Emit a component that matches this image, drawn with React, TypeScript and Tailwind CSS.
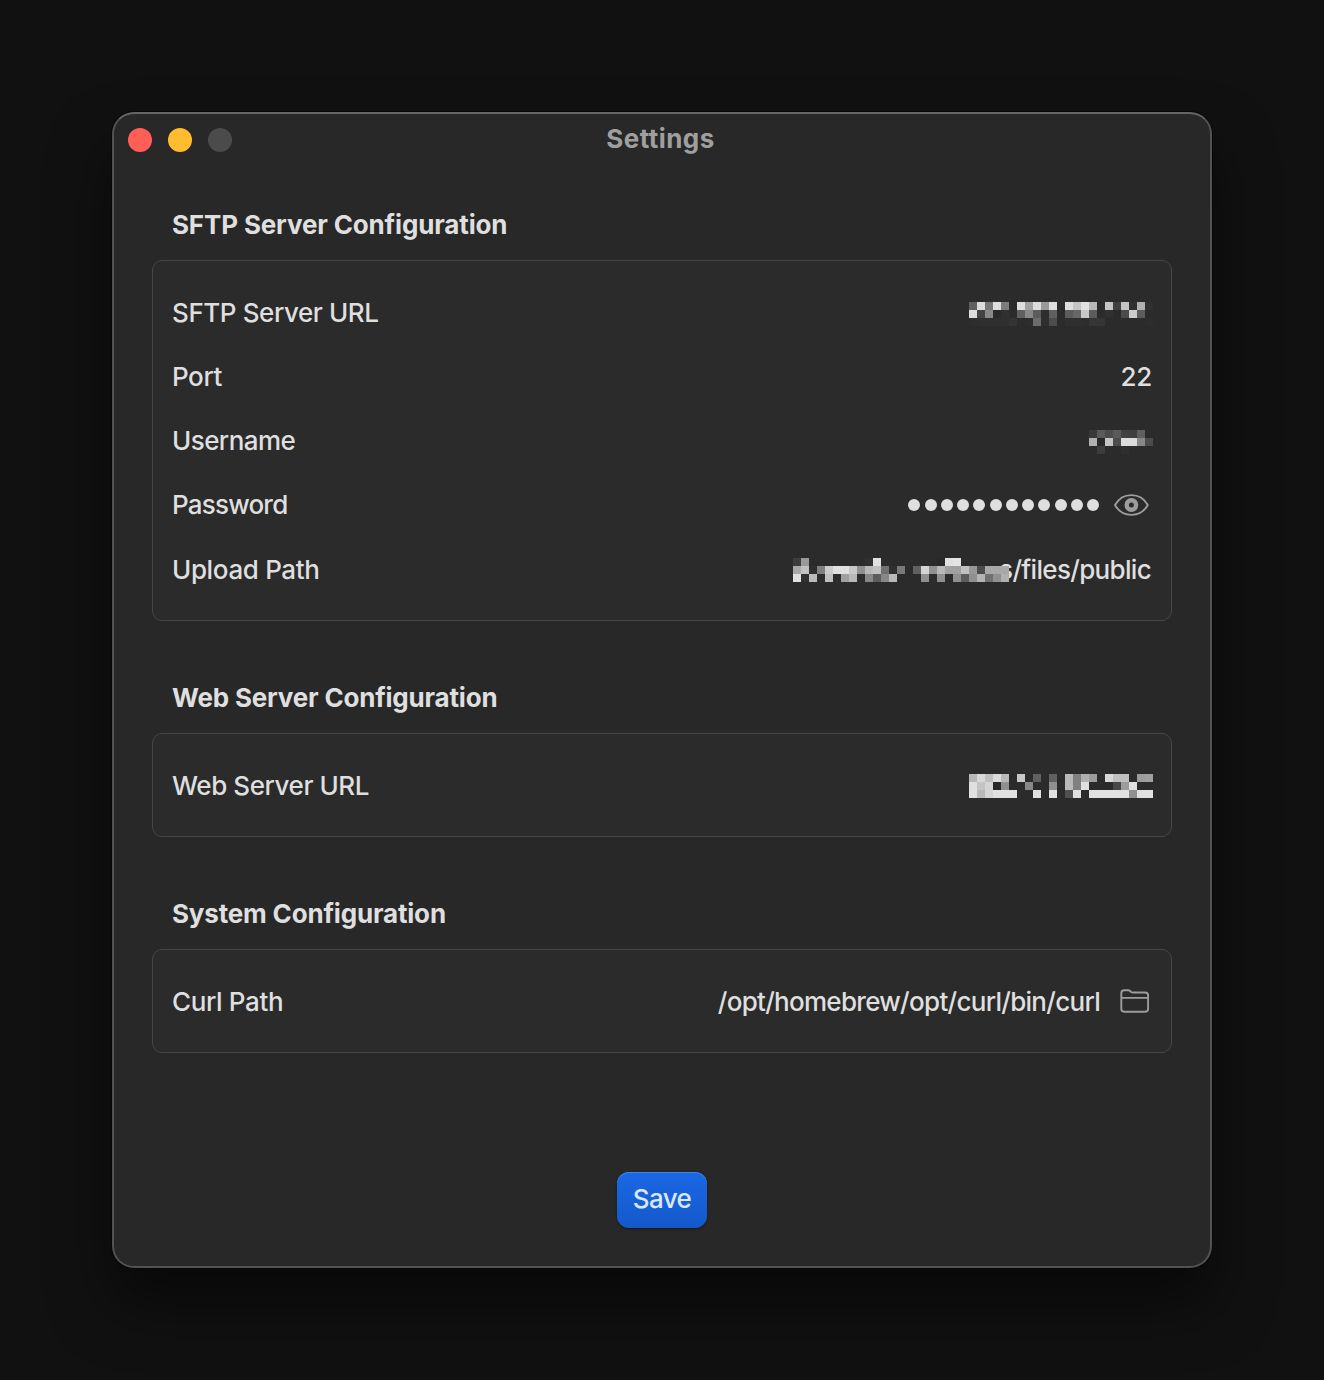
import type { ReactNode } from 'react';

const CELL = 8;

// Each row is a run of two-digit grey levels; ".." leaves the cell empty.
const MOSAICS = {
  sftpUrl: [
    '60 dc 77 de 7c .. dd a0 dd 99 dd .. dd c4 e0 b8 .. c4 40 c4 30 b0 30',
    'dd 44 8a 2a 30 .. 60 88 5c 2e 60 .. 5c 68 c8 5c .. 30 2a 4a cc 5c ..',
    '2d 2f 2f 2f 2f 34 .. 2d 6c 2f 4c .. 2f 2f 2d 35 35 .. .. .. .. .. 2d',
  ],
  username: [
    '38 5a 4c 5a 42 40 60 ..',
    'b0 28 c4 4c dc dc 88 4c',
    '.. 3c .. .. 2f .. .. ..',
  ],
  uploadPath: [
    '3c 99 .. .. .. .. .. .. .. 30 e0 .. .. .. .. .. .. .. 28 e0 e4 .. .. .. .. .. ..',
    'a8 c0 2f 80 cc e0 e0 c8 90 b8 c0 70 2f 78 .. 60 d4 90 b8 a0 a0 c0 98 4c a8 a8 a8',
    'e0 30 bc 2d c0 2d a0 b8 2d 88 5c 88 b8 .. .. .. 90 2d 90 .. 90 5c 90 b4 70 90 b0',
  ],
  webUrl: [
    'b8 d8 c0 dc b8 .. c8 .. 60 .. 60 .. b8 80 b0 9c .. d8 c0 c0 .. 9c a0',
    'e0 c4 d4 28 90 .. .. 88 .. .. 90 .. b8 80 e0 .. .. .. 48 9c e0 .. ..',
    'e0 b8 d4 e0 e0 e0 .. .. e0 .. e0 .. 50 e0 .. e0 e0 e0 e0 e0 90 e0 e0',
  ],
};

function Mosaic({ rows, className }: { rows: string[]; className: string }) {
  const cells = rows.map((r) => r.split(' '));
  const width = cells[0].length * CELL;
  const height = rows.length * CELL;
  return (
    <svg
      width={width}
      height={height}
      viewBox={`0 0 ${width} ${height}`}
      shapeRendering="crispEdges"
      className={`shrink-0 ${className}`}
    >
      {cells.map((row, y) =>
        row.map((c, x) =>
          c === '..' ? null : (
            <rect key={`${x}-${y}`} x={x * CELL} y={y * CELL} width={CELL} height={CELL} fill={`#${c}${c}${c}`} />
          ),
        ),
      )}
    </svg>
  );
}

function EyeIcon() {
  return (
    <svg width="36" height="24" viewBox="0 0 36 24" fill="none" className="ml-[15px] mr-[2px] shrink-0">
      <path
        d="M1 12C4.300 6.200 10.400 2.100 17.400 2.100S30.500 6.200 33.800 12C30.500 17.800 24.400 21.900 17.400 21.900S4.300 17.800 1 12Z"
        stroke="#9d9d9d"
        strokeWidth="1.9"
        strokeLinejoin="round"
      />
      <circle cx="17.4" cy="12" r="4.7" stroke="#9d9d9d" strokeWidth="4.4" />
    </svg>
  );
}

function FolderIcon() {
  return (
    <svg width="30" height="24" viewBox="0 0 30 24" fill="none" className="mb-[2px] ml-[20px] mr-[2px] shrink-0">
      <path
        d="M1.300 19.800V4.200Q1.300 1.300 4.200 1.300H8.200Q9.300 1.300 10.200 2L11.200 2.900Q12 3.500 13.200 3.500H25.200Q28.100 3.500 28.100 6.400V19.800Q28.100 22.700 25.200 22.700H4.200Q1.300 22.700 1.300 19.800ZM1.300 8.900H28.100"
        stroke="#9d9d9d"
        strokeWidth="1.9"
      />
    </svg>
  );
}

function Section({ title, className, children }: { title: string; className: string; children: ReactNode }) {
  return (
    <section>
      <h2 className={`pl-5 text-[26px] leading-8 font-bold text-[#dfdfdf] ${className}`}>{title}</h2>
      <div className="mt-[19px] rounded-[10px] border border-[#464646] bg-[#2b2b2b] px-[19px] pt-5 pb-[18px]">
        {children}
      </div>
    </section>
  );
}

function Row({ label, className, children }: { label: string; className: string; children: ReactNode }) {
  return (
    <div className="flex h-16 items-center justify-between whitespace-nowrap">
      <span className={className}>{label}</span>
      <div className="flex items-center">{children}</div>
    </div>
  );
}

export default function App() {
  return (
    <div className="flex h-[1380px] w-[1324px] bg-[#111111] pt-28 pl-28 font-['Inter',sans-serif] text-[26px] leading-8 font-[450] text-[#dfdfdf]">
      <main className="flex h-[1156px] w-[1100px] flex-col rounded-[22px] border-2 border-[#525252] border-t-[#666666] bg-[#282828] shadow-[0_0_0_1px_#080808,0_36px_60px_rgba(0,0,0,0.5)]">
        <header className="grid h-[52px] grid-cols-3 items-center px-[14px]">
          <div className="flex gap-4">
            <span className="size-6 rounded-full bg-[#ff5f57]" />
            <span className="size-6 rounded-full bg-[#febc2e]" />
            <span className="size-6 rounded-full bg-[#4b4b4b]" />
          </div>
          <h1 className="pr-[3px] pb-[2px] text-center font-bold tracking-[0.45px] text-[#9f9f9f]">Settings</h1>
        </header>

        <div className="flex flex-col px-[38px] pt-[43px]">
          <Section title="SFTP Server Configuration" className="tracking-[-0.15px]">
            <Row label="SFTP Server URL" className="tracking-[-0.41px]">
              <Mosaic rows={MOSAICS.sftpUrl} className="mt-[2px] -mr-px" />
            </Row>
            <Row label="Port" className="tracking-[-0.4px]">
              <span className="tracking-[-0.3px]">22</span>
            </Row>
            <Row label="Username" className="tracking-[-0.55px]">
              <Mosaic rows={MOSAICS.username} className="mt-[2px] -mr-px" />
            </Row>
            <Row label="Password" className="tracking-[-0.8px]">
              <div className="flex gap-[4.24px]">
                {Array.from({ length: 12 }, (_, i) => (
                  <span key={i} className="size-3 rounded-full bg-[#dfdfdf]" />
                ))}
              </div>
              <EyeIcon />
            </Row>
            <div className="pt-px">
              <Row label="Upload Path" className="tracking-[-0.35px]">
                <Mosaic rows={MOSAICS.uploadPath} className="z-10 -mr-[10px]" />
                <span className="mr-px tracking-[-0.68px]">s/files/public</span>
              </Row>
            </div>
          </Section>

          <div className="mt-[61px]">
            <Section title="Web Server Configuration" className="tracking-[-0.2px]">
              <Row label="Web Server URL" className="tracking-[-0.43px]">
                <Mosaic rows={MOSAICS.webUrl} className="-mr-px" />
              </Row>
            </Section>
          </div>

          <div className="mt-[61px]">
            <Section title="System Configuration" className="tracking-[-0.18px]">
              <Row label="Curl Path" className="tracking-[-0.37px]">
                <span className="tracking-[-0.71px]">/opt/homebrew/opt/curl/bin/curl</span>
                <FolderIcon />
              </Row>
            </Section>
          </div>
        </div>

        <button className="mt-[119px] h-14 w-[90px] self-center rounded-xl bg-linear-to-b from-[#1a68e5] to-[#1459cb] pb-[2px] tracking-[-0.6px] text-[#dbe7fa] shadow-[0_1px_2px_rgba(0,0,0,0.5),inset_0_1px_0_#4083ea]">
          Save
        </button>
      </main>
    </div>
  );
}
